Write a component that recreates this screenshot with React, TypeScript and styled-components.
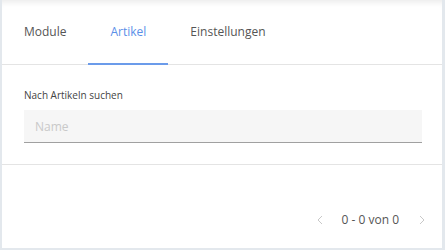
import { FC, useState } from "react"
import styled, { createGlobalStyle } from "styled-components"

const GlobalStyle = createGlobalStyle`
  html, body {
    margin: 0;
    padding: 0;
    background: #e3e8ed;
    font-family: "Open Sans", "Liberation Sans", sans-serif;
  }
`

const Card = styled.div`
  background: #ffffff;
  margin: 0 3px 0 2px;
  height: 248px;
  display: flex;
  flex-direction: column;
  box-shadow: inset 0 7px 6px -5px rgba(0, 0, 0, 0.09);
`

const TabBar = styled.div`
  display: flex;
  height: 64px;
  border-bottom: 1px solid #e4e4e4;
`

const Tab = styled.div<{ $active?: boolean }>`
  display: flex;
  align-items: center;
  padding: 0 22px;
  font-size: 12px;
  color: ${(p) => (p.$active ? "#5b8fe8" : "#555555")};
  border-bottom: 2px solid ${(p) => (p.$active ? "#6b9bea" : "transparent")};
  margin-bottom: -1px;
  cursor: pointer;
`

const Section = styled.div`
  padding: 23px 20px 21px 22px;
  border-bottom: 1px solid #e4e4e4;
`

const Label = styled.div`
  font-size: 10px;
  color: #444444;
  margin-bottom: 8px;
`

const SearchInput = styled.input`
  box-sizing: border-box;
  width: 100%;
  height: 33px;
  border: none;
  border-bottom: 1px solid #a0a0a0;
  background: #f6f6f6;
  padding: 0 11px;
  font-family: inherit;
  font-size: 12px;
  color: #333;
  outline: none;
  &::placeholder {
    color: #c9c9c9;
  }
`

const Footer = styled.div`
  flex: 1;
  display: flex;
  justify-content: flex-end;
  align-items: center;
  padding: 26px 15px 0 0;
`

const Pager = styled.div`
  display: flex;
  align-items: center;
  font-size: 12px;
  color: #555555;
`

const ArrowButton = styled.span`
  display: flex;
  align-items: center;
  padding: 0 2px;
  color: #c8c8c8;
`

const Range = styled.span`
  padding: 0 18px 0 17px;
`

const Chevron: FC<{ dir: "left" | "right" }> = ({ dir }) => (
  <svg width="6" height="10" viewBox="0 0 6 10" fill="none">
    <path
      d={dir === "left" ? "M5 1 L1 5 L5 9" : "M1 1 L5 5 L1 9"}
      stroke="currentColor"
      strokeWidth="1"
    />
  </svg>
)

const tabs = ["Module", "Artikel", "Einstellungen"]

const App: FC = () => {
  const [active, setActive] = useState<number>(1)
  const [query, setQuery] = useState<string>("")

  return (
    <>
      <GlobalStyle />
      <Card>
        <TabBar>
          {tabs.map((t, i) => (
            <Tab key={t} $active={i === active} onClick={() => setActive(i)}>
              {t}
            </Tab>
          ))}
        </TabBar>
        <Section>
          <Label>Nach Artikeln suchen</Label>
          <SearchInput
            value={query}
            onChange={(e) => setQuery(e.target.value)}
            placeholder="Name"
          />
        </Section>
        <Footer>
          <Pager>
            <ArrowButton>
              <Chevron dir="left" />
            </ArrowButton>
            <Range>0 - 0 von 0</Range>
            <ArrowButton>
              <Chevron dir="right" />
            </ArrowButton>
          </Pager>
        </Footer>
      </Card>
    </>
  )
}

export default App
